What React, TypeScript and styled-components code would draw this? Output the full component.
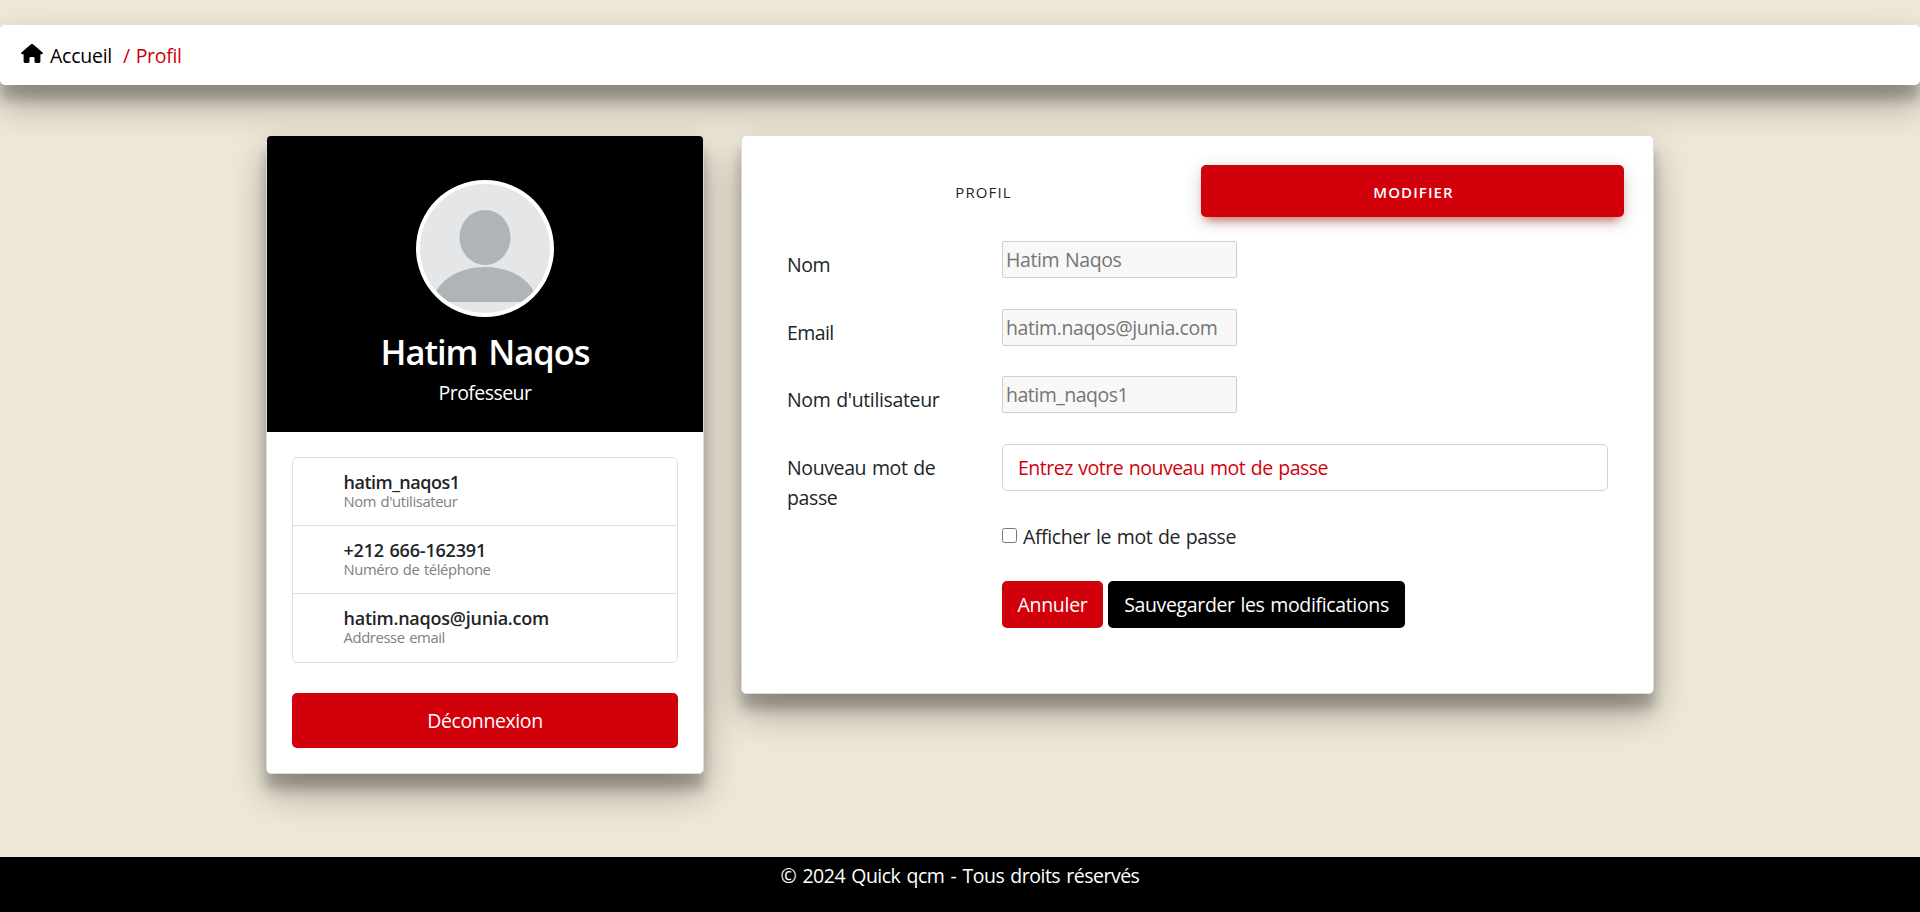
import React, { useState } from "react";
import styled, { createGlobalStyle, css } from "styled-components";

const red = "#d2000a";
const raised = css`
  box-shadow: 0 19px 38px rgba(0, 0, 0, 0.3), 0 15px 12px rgba(0, 0, 0, 0.22);
`;

const GlobalStyle = createGlobalStyle`
  *, *::before, *::after { box-sizing: border-box; }
  body {
    margin: 0;
    background: #efe8d8;
    color: #212529;
    font: 400 19.5px/30px "Open Sans", "Noto Sans", sans-serif;
    letter-spacing: -0.48px;
    word-spacing: 1px;
  }
  input, button { font: inherit; letter-spacing: inherit; word-spacing: inherit; }
`;

const Page = styled.div`
  display: flex;
  flex-direction: column;
  min-height: 912px;
  padding-top: 25px;
`;

const Breadcrumb = styled.nav`
  display: flex;
  align-items: center;
  height: 60px;
  padding: 2px 0 0 21px;
  border-radius: 5px;
  background: #fff;
  ${raised}
`;

const HomeIcon = styled.svg`
  width: 22px;
  height: 19px;
  margin: 0 7px 5px 0;
`;

const HomeLink = styled.a`
  color: #000;
  letter-spacing: -0.25px;
`;

const Current = styled.span`
  margin-left: 11px;
  color: ${red};
  letter-spacing: -0.3px;
`;

const Main = styled.main`
  display: grid;
  grid-template-columns: 438px 913px;
  column-gap: 37px;
  align-items: start;
  flex: 1;
  padding: 50px 0 83px 266px;
`;

const Card = styled.section<{ $height: number }>`
  height: ${(p) => p.$height}px;
  overflow: hidden;
  border: 1px solid #dcdcda;
  border-radius: 5px;
  background: #fff;
  ${raised}
`;

const Identity = styled.header`
  display: flex;
  flex-direction: column;
  align-items: center;
  height: 296px;
  padding-top: 44px;
  background: #000;
  color: #fff;
`;

const Avatar = styled.svg`
  width: 138px;
  height: 137px;
  border: 4px solid #fff;
  border-radius: 50%;
  background: #e4e6e7;
`;

const Name = styled.h1`
  margin: 14px 0 5px;
  font-size: 34.5px;
  font-weight: 600;
  line-height: 42px;
  letter-spacing: -1.05px;
  word-spacing: 3px;
`;

const Role = styled.p`
  margin: 0;
  letter-spacing: -0.55px;
`;

const CardBody = styled.div`
  padding: 25px;
`;

const Facts = styled.ul`
  margin: 0 0 30px;
  padding: 0;
  list-style: none;
  border: 1px solid #dfdfdf;
  border-radius: 5px;
`;

const Fact = styled.li`
  height: 68px;
  padding: 14px 0 0 50.5px;

  &:not(:last-child) {
    border-bottom: 1px solid #dfdfdf;
  }
`;

const FactValue = styled.div<{ $track: number }>`
  margin-bottom: 1px;
  font-size: 18px;
  font-weight: 600;
  line-height: 20px;
  letter-spacing: ${(p) => p.$track}px;
`;

const FactLabel = styled.div`
  color: #808080;
  font-size: 14.8px;
  line-height: 16px;
  letter-spacing: -0.38px;
`;

const Button = styled.button<{ $color: string; $width: number; $track: number }>`
  width: ${(p) => p.$width}px;
  height: 47px;
  padding: 0;
  border: 0;
  border-radius: 5px;
  background: ${(p) => p.$color};
  color: #fff;
  letter-spacing: ${(p) => p.$track}px;
`;

const LogoutButton = styled(Button)`
  display: block;
  height: 55px;
`;

const Tabs = styled.div`
  display: grid;
  grid-template-columns: 1fr 1fr;
  gap: 7px;
  padding: 29px 29px 0;
`;

const Tab = styled.button<{ $active?: boolean }>`
  height: 52px;
  padding: 1px 0 0 2px;
  border: 0;
  border-radius: 5px;
  background: transparent;
  color: #212529;
  font-size: 15px;
  letter-spacing: 1.1px;
  text-transform: uppercase;
  ${(p) =>
    p.$active &&
    css`
      background: ${red};
      color: #fff;
      font-weight: 600;
      box-shadow: 0 4px 20px rgba(0, 0, 0, 0.14), 0 7px 10px -5px rgba(190, 50, 20, 0.75);
    `}
`;

const Form = styled.form`
  display: grid;
  grid-template-columns: 215px 606px;
  grid-template-rows: 67.5px 67.5px 68px 77.5px 59.5px 47px;
  justify-items: start;
  align-items: start;
  padding: 24px 0 0 45px;
`;

const Label = styled.label<{ $track: number }>`
  max-width: 184px;
  padding-top: 9.4px;
  letter-spacing: ${(p) => p.$track}px;
`;

const ReadOnlyInput = styled.input<{ $track: number }>`
  width: 235px;
  height: 37px;
  padding: 1px 4px 1px 3px;
  border: 1px solid #cfcfcf;
  border-radius: 2px;
  background: #f8f8f8;
  color: #757575;
  letter-spacing: ${(p) => p.$track}px;
`;

const PasswordInput = styled.input`
  width: 606px;
  height: 47px;
  padding: 0 15px;
  border: 1px solid #ced4da;
  border-radius: 5px;
  background: #fff;
  letter-spacing: -0.5px;

  &::placeholder {
    color: ${red};
    opacity: 1;
  }
`;

const CheckLine = styled.label`
  display: flex;
  grid-column: 2;
  align-items: flex-start;
  gap: 6px;
  letter-spacing: -0.4px;
`;

const Checkbox = styled.input`
  width: 15px;
  height: 15px;
  margin: 6px 0 0;
`;

const Actions = styled.div`
  display: flex;
  grid-column: 2;
  gap: 5px;
`;

const Footer = styled.footer`
  height: 55px;
  padding-top: 4px;
  background: #000;
  color: #fff;
  text-align: center;
  letter-spacing: -0.5px;
  word-spacing: 1.6px;
`;

const facts = [
  { value: "hatim_naqos1", label: "Nom d'utilisateur", track: -0.5 },
  { value: "+212 666-162391", label: "Numéro de téléphone", track: -0.18 },
  { value: "hatim.naqos@junia.com", label: "Addresse email", track: -0.24 },
];

const fields = [
  { label: "Nom", value: "Hatim Naqos", labelTrack: -0.45, track: -0.38 },
  { label: "Email", value: "hatim.naqos@junia.com", labelTrack: -0.6, track: -0.4 },
  { label: "Nom d'utilisateur", value: "hatim_naqos1", labelTrack: -0.35, track: -0.5 },
];

export default function App() {
  const [visible, setVisible] = useState(false);
  return (
    <Page>
      <GlobalStyle />
      <Breadcrumb>
        <HomeIcon viewBox="0 0 22 19">
          <path d="M9.7.5a2 2 0 0 1 2.6 0l9 7.8c.9.8.5 2-.7 2h-1.2v6.9c0 1.1-.7 1.8-1.8 1.8h-2.4c-1.1 0-1.7-.6-1.7-1.7v-3.1c0-.7-.4-1.1-1.1-1.1H9.6c-.7 0-1.1.4-1.1 1.1v3.1c0 1.1-.6 1.7-1.7 1.7H4.4c-1.1 0-1.8-.7-1.8-1.8v-6.9H1.4c-1.2 0-1.6-1.2-.7-2z" />
        </HomeIcon>
        <HomeLink>Accueil</HomeLink>
        <Current>/ Profil</Current>
      </Breadcrumb>
      <Main>
        <Card $height={639}>
          <Identity>
            <Avatar viewBox="0 0 130 129">
              <ellipse cx="65" cy="53.5" rx="25.5" ry="27.5" fill="#aeb4b7" />
              <path d="M12 118C17 96 39 83 65 83s48 13 53 35z" fill="#aeb4b7" />
            </Avatar>
            <Name>Hatim Naqos</Name>
            <Role>Professeur</Role>
          </Identity>
          <CardBody>
            <Facts>
              {facts.map((f) => (
                <Fact key={f.label}>
                  <FactValue $track={f.track}>{f.value}</FactValue>
                  <FactLabel>{f.label}</FactLabel>
                </Fact>
              ))}
            </Facts>
            <LogoutButton $color={red} $width={386} $track={-0.4}>
              Déconnexion
            </LogoutButton>
          </CardBody>
        </Card>
        <Card $height={559}>
          <Tabs>
            <Tab>Profil</Tab>
            <Tab $active>Modifier</Tab>
          </Tabs>
          <Form>
            {fields.map((f) => (
              <React.Fragment key={f.label}>
                <Label $track={f.labelTrack}>{f.label}</Label>
                <ReadOnlyInput disabled defaultValue={f.value} $track={f.track} />
              </React.Fragment>
            ))}
            <Label $track={-0.38}>Nouveau mot de passe</Label>
            <PasswordInput
              type={visible ? "text" : "password"}
              placeholder="Entrez votre nouveau mot de passe"
            />
            <CheckLine>
              <Checkbox type="checkbox" checked={visible} onChange={() => setVisible(!visible)} />
              Afficher le mot de passe
            </CheckLine>
            <Actions>
              <Button type="button" $color={red} $width={101} $track={-0.3}>
                Annuler
              </Button>
              <Button type="button" $color="#000" $width={297} $track={-0.35}>
                Sauvegarder les modifications
              </Button>
            </Actions>
          </Form>
        </Card>
      </Main>
      <Footer>© 2024 Quick qcm - Tous droits réservés</Footer>
    </Page>
  );
}
